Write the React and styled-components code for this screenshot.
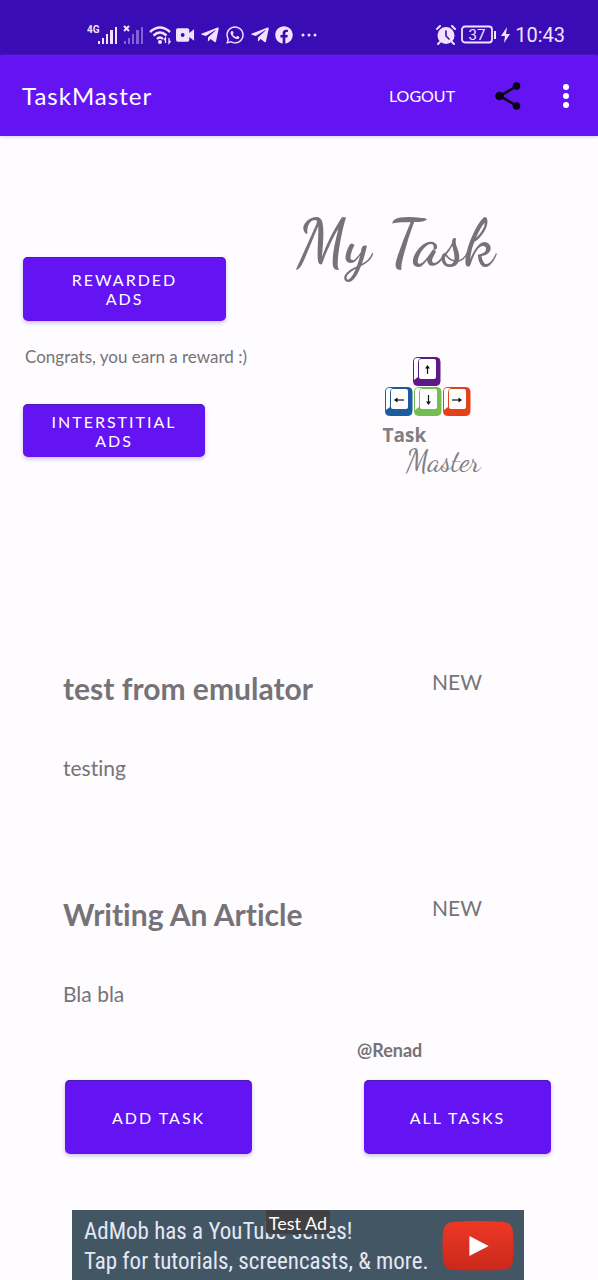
import React from "react";
import styled, { createGlobalStyle } from "styled-components";
import { FaTelegramPlane, FaWhatsapp, FaFacebook } from "react-icons/fa";

const GlobalStyle = createGlobalStyle`
  * { box-sizing: border-box; }
  body {
    margin: 0;
    background: #fefcff;
    color: #757377;
    font-family: Lato, "Noto Sans", sans-serif;
    font-variant-ligatures: no-common-ligatures;
  }
  h1, h2, p { margin: 0; }
`;

const Page = styled.div`
  display: flex;
  flex-direction: column;
`;

const StatusBar = styled.div`
  display: flex;
  align-items: center;
  justify-content: space-between;
  height: 56px;
  padding: 13px 33px 0 87px;
  background: #3a0cb5;
  color: #f1e2ff;
`;

const StatusGroup = styled.div`
  display: flex;
  align-items: center;
  gap: ${(p) => p.$gap}px;
  svg { display: block; }
`;

const Clock = styled.time`
  font-family: Roboto, sans-serif;
  font-size: 20px;
  line-height: 24px;
`;

const AppBar = styled.header`
  display: flex;
  align-items: center;
  height: 80px;
  padding: 0 16px 0 22px;
  background: #6414f2;
  color: #fff;
  box-shadow: 0 1px 3px #d9c8f5;
`;

const AppTitle = styled.h1`
  flex: 1;
  font-size: 24px;
  font-weight: 400;
  line-height: 32px;
  letter-spacing: 1px;
`;

const BarButton = styled.button`
  display: flex;
  align-items: center;
  justify-content: center;
  width: ${(p) => p.$width}px;
  height: 48px;
  padding: 0;
  border: 0;
  background: none;
  color: inherit;
  font: 400 16px/24px Lato, sans-serif;
`;

const Hero = styled.section`
  display: grid;
  grid-template-columns: 256px 1fr;
  padding: 64px 86px 0 23px;
`;

const Rewards = styled.div`
  display: flex;
  flex-direction: column;
  align-items: flex-start;
  padding-top: 57px;
`;

const Button = styled.button`
  width: ${(p) => p.$width};
  height: ${(p) => p.$height}px;
  padding: 0 ${(p) => p.$inset || 16}px;
  border: 0;
  border-radius: 5px;
  background: #6414f2;
  box-shadow: 0 2px 4px #cdbfdf, inset 0 1px 0 #4a1bb5;
  color: #fff;
  font: 400 16px/19px Lato, sans-serif;
  letter-spacing: 2px;
`;

const RewardText = styled.p`
  padding: 24px 2px 35px;
  font-size: 17px;
  line-height: 24px;
  white-space: nowrap;
`;

const Brand = styled.div`
  display: flex;
  flex-direction: column;
  align-items: center;
`;

const ScriptTitle = styled.h2`
  font: 600 64px/88px "Dancing Script", "Liberation Serif", cursive;
  white-space: nowrap;
`;

const Logo = styled.figure`
  display: flex;
  flex-direction: column;
  width: 98px;
  margin: 69px 0 0 72px;
  svg { display: block; margin-left: 2px; }
`;

const LogoWord = styled.span`
  padding-top: 6px;
  font: 700 19px/24px "Open Sans", sans-serif;
  color: #807e82;
`;

const LogoScript = styled.span`
  align-self: flex-end;
  font: 400 30px/28px "Dancing Script", "Liberation Serif", cursive;
  color: #807e82;
`;

const TaskList = styled.section`
  display: flex;
  flex-direction: column;
  gap: 108px;
  padding: 191px 64px 0 63px;
`;

const Task = styled.article`
  display: grid;
  grid-template-columns: 1fr 102px;
  row-gap: 42px;
`;

const TaskTitle = styled.h2`
  font-size: 30px;
  font-weight: 700;
  line-height: 44px;
`;

const TaskText = styled.p`
  font-size: 21px;
  line-height: 32px;
`;

const Footer = styled.footer`
  display: flex;
  flex-direction: column;
  padding: 28px 47px 0 65px;
`;

const User = styled.p`
  padding-left: 292px;
  font-size: 18px;
  font-weight: 700;
  line-height: 24px;
`;

const Actions = styled.div`
  display: flex;
  justify-content: space-between;
  padding: 18px 0 56px;
`;

const Ad = styled.a`
  position: relative;
  display: flex;
  align-items: center;
  justify-content: space-between;
  height: 70px;
  margin: 0 74px 1px 72px;
  padding: 1px 10px 0 12px;
  background: #435664;
  color: #e3e8f5;
  font: 400 23px/30px "Roboto Condensed", "Liberation Sans Narrow", Roboto, sans-serif;
  text-decoration: none;
  white-space: nowrap;
`;

const AdText = styled.span`
  padding-top: 2px;
`;

const AdBadge = styled.span`
  position: absolute;
  top: 0;
  left: 50%;
  transform: translateX(-50%);
  padding: 2px 3px 0;
  border-radius: 0 0 4px 4px;
  background: #414042;
  color: #fff;
  font: 400 18px/22px Lato, sans-serif;
`;

const Signal = ({ label, dim }) => (
  <svg width={dim ? 21 : 31} height="22" viewBox={dim ? "10 0 21 22" : "0 0 31 22"} fill="currentColor">
    {label && <text x="0" y="9" fontSize="10" fontWeight="700" fontFamily="Liberation Sans Narrow, Roboto, sans-serif">{label}</text>}
    {dim && <path d="M11 2l5 5M16 2l-5 5" stroke="currentColor" strokeWidth="2" />}
    <g opacity={dim ? 0.4 : 1}>
      <rect x="11" y="17" width="2" height="3" />
      <rect x="15" y="14" width="2" height="6" />
      <rect x="19" y="10" width="2" height="10" />
      <rect x="23" y="6" width="3" height="14" />
      <rect x="28" y="3" width="2" height="17" />
    </g>
  </svg>
);

const Wifi = () => (
  <svg width="22" height="20" viewBox="0 0 22 20" fill="none" stroke="currentColor" strokeWidth="2.4">
    <path d="M1 7Q11 -2 21 7M4.500 10.500Q11 4.500 17.500 10.500M8 14Q11 11 14 14" />
    <circle cx="11" cy="17" r="2" fill="currentColor" stroke="none" />
    <path d="M16.500 18v-5l-1.500 2M20 13v5l1.500-2" strokeWidth="1.300" />
  </svg>
);

const Video = () => (
  <svg width="19" height="14" viewBox="0 0 20 14" fill="currentColor">
    <path fillRule="evenodd" d="M2 0h10q2 0 2 2v3l5-4v12l-5-4v3q0 2-2 2H2q-2 0-2-2V2q0-2 2-2zM7 5a2 2 0 1 0 .01 0z" />
  </svg>
);

const Alarm = () => (
  <svg width="20" height="20" viewBox="0 0 20 20" fill="none" stroke="currentColor" strokeWidth="2" strokeLinecap="round">
    <circle cx="10" cy="10.500" r="8.500" fill="currentColor" stroke="none" />
    <path d="M1 4l3-3M19 4l-3-3M4 17l-2 2M16 17l2 2" />
    <path d="M10 6v5l3 3" stroke="#3a0cb5" strokeWidth="1.600" />
  </svg>
);

const Battery = () => (
  <svg width="35" height="20" viewBox="0 0 35 20" fill="none" stroke="currentColor">
    <rect x="1" y="1.500" width="30" height="16" rx="3" strokeWidth="1.800" />
    <path d="M34 6v8" strokeWidth="2" />
    <text x="16" y="15" textAnchor="middle" fontSize="15" fontFamily="Roboto, sans-serif" fill="currentColor" stroke="none">37</text>
  </svg>
);

const Share = () => (
  <svg width="28" height="30" viewBox="0 0 28 30" fill="#080612" stroke="#080612">
    <path d="M23 5L6 15l17 10" fill="none" strokeWidth="2.600" />
    <circle cx="22.500" cy="5" r="3.400" />
    <circle cx="5.500" cy="15" r="3.800" />
    <circle cx="22.500" cy="25" r="3.400" />
  </svg>
);

const keys = [
  { x: 28, y: 0, color: "#5d1a87", arrow: "M14.500 17V9", head: "M12 11.500L14.500 8l2.500 3.500z" },
  { x: 0, y: 30, color: "#1d5b9f", arrow: "M19 13H11", head: "M12.500 10.500L9 13l3.500 2.500z" },
  { x: 29, y: 30, color: "#74bd50", arrow: "M14.500 8v8", head: "M12 14.500L14.500 18l2.500-3.500z" },
  { x: 58, y: 30, color: "#e34119", arrow: "M9 13h8", head: "M15.500 10.500L19 13l-3.500 2.500z" },
];

const Keys = () => (
  <svg width="88" height="60" viewBox="0 0 88 60" role="img" aria-label="Arrow keys">
    {keys.map((k) => (
      <g key={k.color} transform={`translate(${k.x} ${k.y})`}>
        <rect x="0.500" y="0.500" width="26.500" height="28" rx="4" fill={k.color} stroke={k.color} />
        <path d="M4 1h4Q5 2 5 6v14L1 23V4q0-3 3-3z" fill="#fff" />
        <rect x="6" y="2" width="17" height="20" rx="2" fill="#fff" />
        <path d={k.arrow} fill="none" stroke="#111" strokeWidth="1.200" />
        <path d={k.head} fill="#111" />
      </g>
    ))}
  </svg>
);

const PlayBadge = () => (
  <svg width="72" height="50" viewBox="0 0 71 50" preserveAspectRatio="none">
    <defs>
      <linearGradient id="play-red" x2="0" y2="1">
        <stop stopColor="#ee3825" />
        <stop offset="1" stopColor="#c9281c" />
      </linearGradient>
    </defs>
    <path d="M11 1Q35-1 60 1q9 0 10 10 1 14 0 28-1 10-10 10-25 1-49 0-9 0-10-10-1-14 0-28Q2 1 11 1z" fill="url(#play-red)" />
    <path d="M27 15l19 10-19 10z" fill="#fff" />
  </svg>
);

const tasks = [
  { title: "test from emulator", body: "testing", state: "NEW" },
  { title: "Writing An Article", body: "Bla bla", state: "NEW" },
];

export default function App() {
  return (
    <Page>
      <GlobalStyle />
      <StatusBar>
        <StatusGroup $gap={5}>
          <Signal label="4G" />
          <Signal dim />
          <Wifi />
          <Video />
          <FaTelegramPlane size={20} />
          <FaWhatsapp size={20} />
          <FaTelegramPlane size={20} />
          <FaFacebook size={18} />
          <svg width="19" height="4" viewBox="0 0 19 4" fill="currentColor">
            <circle cx="5" cy="2" r="1.500" />
            <circle cx="11" cy="2" r="1.500" />
            <circle cx="17" cy="2" r="1.500" />
          </svg>
        </StatusGroup>
        <StatusGroup $gap={5}>
          <Alarm />
          <Battery />
          <svg width="9" height="18" viewBox="0 0 9 18" fill="currentColor">
            <path d="M6 1L0 10h4l-1 7 6-9H5z" />
          </svg>
          <Clock>10:43</Clock>
        </StatusGroup>
      </StatusBar>

      <AppBar>
        <AppTitle>TaskMaster</AppTitle>
        <BarButton $width={88}>LOGOUT</BarButton>
        <BarButton $width={84} aria-label="Share"><Share /></BarButton>
        <BarButton $width={32} aria-label="More options">
          <svg width="8" height="24" viewBox="0 0 8 24" fill="currentColor">
            <circle cx="4" cy="3" r="3" />
            <circle cx="4" cy="12" r="3" />
            <circle cx="4" cy="21" r="3" />
          </svg>
        </BarButton>
      </AppBar>

      <main>
        <Hero>
          <Rewards>
            <Button $width="203px" $height={64} $inset={32}>REWARDED ADS</Button>
            <RewardText>Congrats, you earn a reward :)</RewardText>
            <Button $width="182px" $height={53}>INTERSTITIAL ADS</Button>
          </Rewards>
          <Brand>
            <ScriptTitle>My Task</ScriptTitle>
            <Logo>
              <Keys />
              <LogoWord>Task</LogoWord>
              <LogoScript>Master</LogoScript>
            </Logo>
          </Brand>
        </Hero>

        <TaskList>
          {tasks.map((t) => (
            <Task key={t.title}>
              <TaskTitle>{t.title}</TaskTitle>
              <TaskText>{t.state}</TaskText>
              <TaskText>{t.body}</TaskText>
            </Task>
          ))}
        </TaskList>
      </main>

      <Footer>
        <User>@Renad</User>
        <Actions>
          <Button $width="38.5%" $height={74}>ADD TASK</Button>
          <Button $width="38.5%" $height={74}>ALL TASKS</Button>
        </Actions>
      </Footer>

      <Ad href="#ad">
        <AdText>
          AdMob has a YouTube series!
          <br />
          Tap for tutorials, screencasts, &amp; more.
        </AdText>
        <PlayBadge />
        <AdBadge>Test Ad</AdBadge>
      </Ad>
    </Page>
  );
}
